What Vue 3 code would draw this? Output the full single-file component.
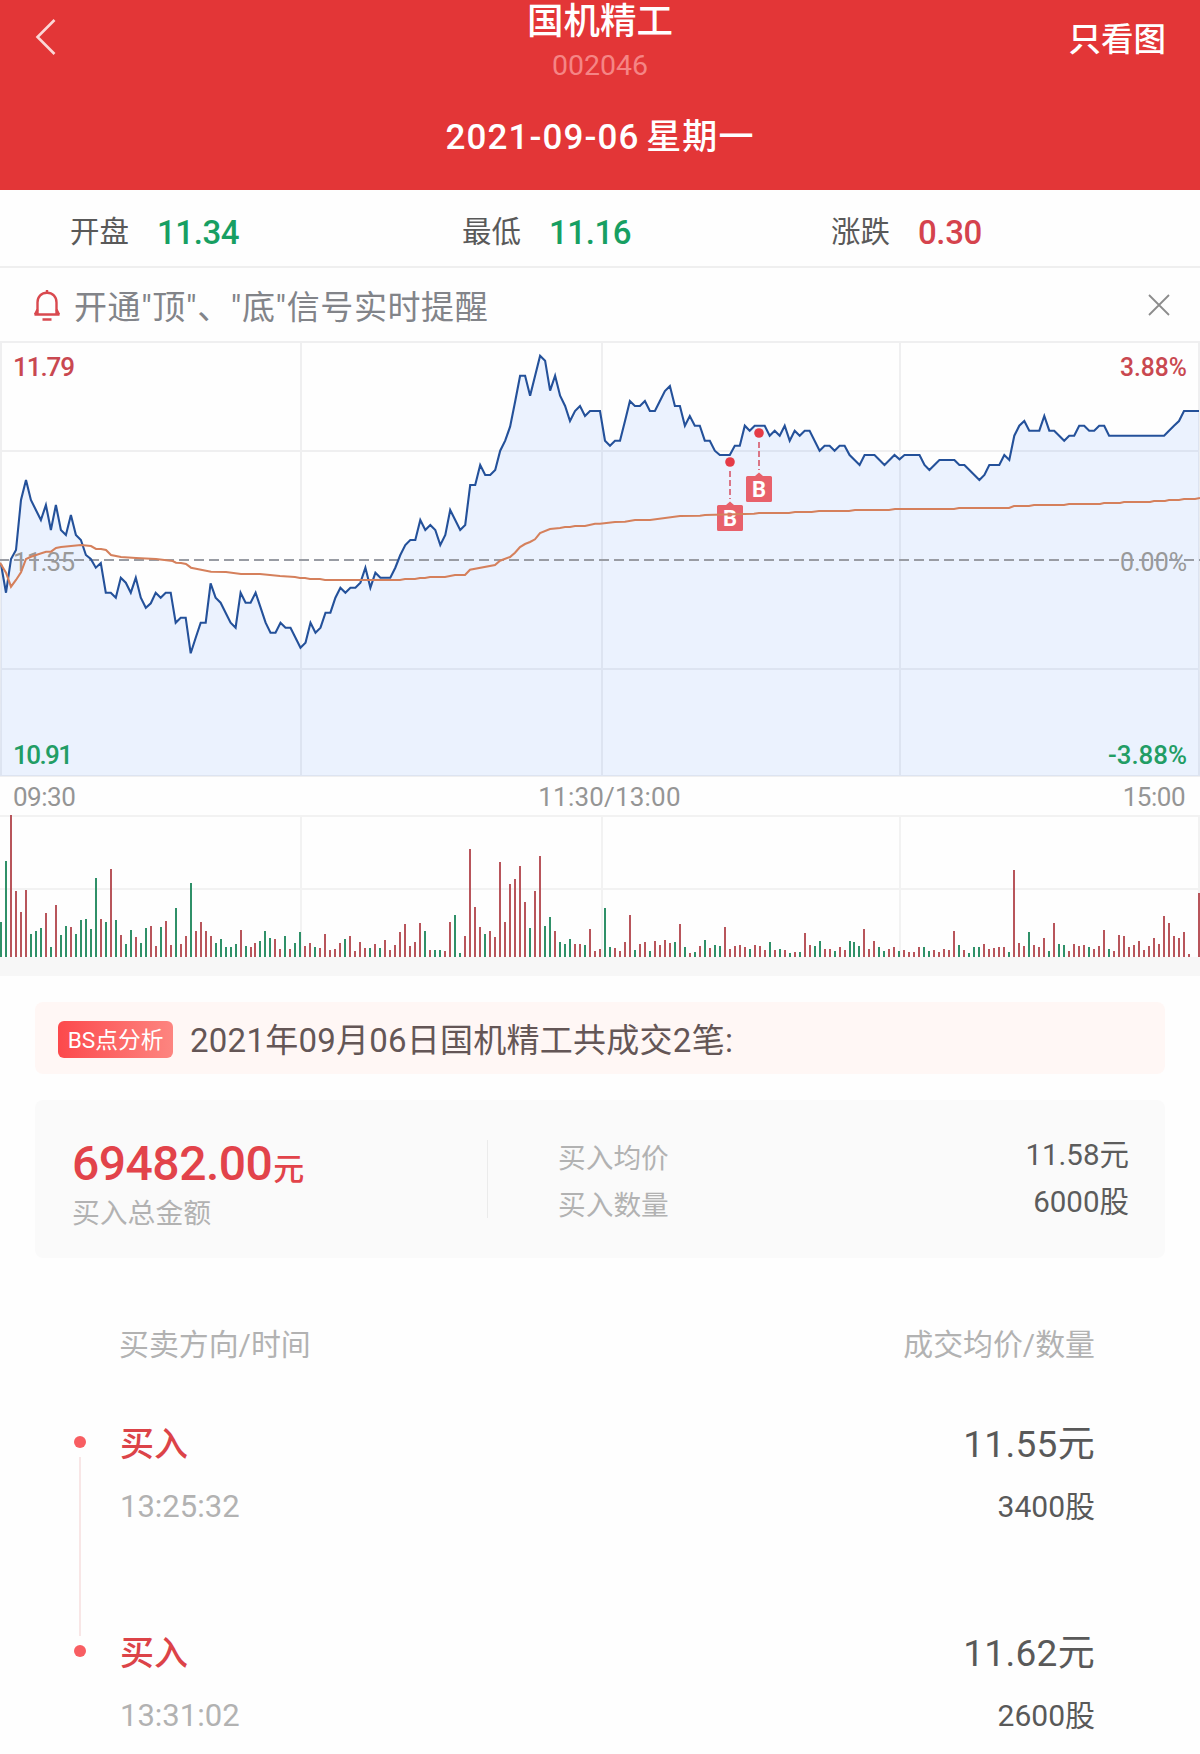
<script setup>
import { computed } from 'vue'

const stock = { name: '国机精工', code: '002046', date: '2021-09-06 星期一' }

const quotes = [
  { label: '开盘', value: '11.34', type: 'down' },
  { label: '最低', value: '11.16', type: 'down' },
  { label: '涨跌', value: '0.30', type: 'up' }
]

const trades = [
  { side: '买入', time: '13:25:32', price: '11.55元', count: '3400股' },
  { side: '买入', time: '13:31:02', price: '11.62元', count: '2600股' }
]

// chart samples are kept in device pixels, one per minute
const RATIO = 3
const STEP = 1198 / 240
const BASE = 142

const price = [
  672, 758, 657, 630, 480, 420, 480, 510, 540, 495, 570, 495, 570, 585, 525, 585, 600, 645, 657, 683,
  669, 758, 758, 773, 713, 728, 758, 713, 773, 803, 790, 758, 773, 758, 758, 848, 833, 833, 940, 893,
  848, 848, 730, 773, 788, 818, 848, 863, 758, 788, 788, 758, 803, 848, 878, 878, 848, 863, 863, 893,
  923, 908, 848, 878, 863, 818, 818, 773, 743, 758, 743, 743, 728, 683, 743, 698, 713, 713, 713, 683,
  645, 615, 600, 600, 540, 570, 555, 570, 615, 585, 510, 540, 570, 555, 435, 435, 375, 405, 405, 390,
  332, 302, 260, 185, 107, 107, 167, 107, 47, 62, 152, 107, 167, 198, 243, 213, 198, 228, 213, 213,
  213, 302, 317, 302, 302, 243, 183, 198, 198, 183, 213, 213, 183, 153, 138, 198, 198, 257, 228, 257,
  257, 302, 302, 332, 345, 345, 345, 317, 317, 257, 272, 257, 257, 257, 287, 272, 287, 257, 302, 272,
  287, 272, 272, 302, 332, 317, 317, 332, 317, 317, 345, 360, 375, 345, 345, 345, 360, 375, 360, 345,
  358, 345, 345, 345, 345, 375, 390, 375, 360, 360, 360, 360, 375, 375, 390, 405, 420, 405, 375, 375,
  375, 345, 360, 287, 257, 243, 272, 272, 272, 228, 272, 272, 287, 302, 287, 287, 257, 257, 272, 272,
  257, 257, 287, 287, 287, 287, 287, 287, 287, 287, 287, 287, 287, 287, 272, 257, 243, 213, 213, 213,
  213
]

const average = [
  [0, 668], [18, 698], [33, 740], [48, 720], [63, 697], [78, 657], [93, 650], [108, 645], [138, 635],
  [153, 635], [168, 624], [183, 621], [213, 618], [243, 615], [273, 618], [288, 627], [303, 627],
  [318, 630], [333, 645], [363, 651], [408, 654], [468, 657], [518, 663], [528, 668], [543, 669],
  [558, 672], [573, 683], [603, 689], [633, 695], [678, 696], [723, 702], [780, 702], [840, 708],
  [885, 711], [900, 714], [915, 714], [930, 717], [960, 717], [975, 720], [1200, 720], [1215, 717],
  [1245, 717], [1260, 714], [1275, 714], [1290, 711], [1335, 711], [1365, 705], [1395, 705],
  [1410, 689], [1485, 675], [1500, 662], [1530, 651], [1545, 638], [1560, 621], [1575, 612],
  [1590, 606], [1605, 598], [1620, 579], [1650, 567], [1680, 564], [1695, 561], [1710, 561],
  [1725, 558], [1755, 558], [1785, 551], [1800, 551], [1845, 546], [1875, 545], [1905, 540],
  [1950, 540], [2040, 528], [2100, 527], [2115, 525], [2262, 521], [2277, 519], [2367, 519],
  [2385, 516], [2435, 516], [2457, 513], [2547, 513], [2565, 510], [2667, 510], [2685, 507],
  [2862, 507], [2877, 504], [3027, 504], [3042, 498], [3087, 498], [3102, 495], [3192, 495],
  [3207, 492], [3300, 492], [3312, 489], [3360, 489], [3372, 486], [3450, 486], [3462, 483],
  [3495, 483], [3507, 480], [3537, 480], [3552, 477], [3585, 477], [3600, 474]
]

// negative volume = falling minute
const volume = [
  -104, -287, 425, 197, 135, 200, -68, -77, -86, 131, -29, 155, -65, -92, 89, -68, -110, -113, -83, -236,
  113, -104, 263, -110, 65, -38, -80, 59, -41, -86, 92, 32, -89, 107, 35, -146, 38, 62, -221, 77,
  104, 77, 62, -41, -53, -29, -29, -38, 80, -32, 29, 41, -47, -77, -56, 53, 23, -62, 23, -41,
  -74, 32, 41, -29, 26, 68, 20, 23, 41, -53, 62, 17, 44, 26, -26, 38, -26, 50, 20, 35,
  74, 98, 32, 44, 101, -77, 20, -20, -20, 17, 104, -125, -11, 62, 323, 149, 89, -68, 77, 59,
  284, 104, 218, 233, 272, 164, -86, 197, 302, -92, -119, 77, -44, -38, -53, 38, 38, -35, 83, 17,
  23, -146, -29, 26, 17, 44, 125, -20, 38, 44, -17, 47, 35, 50, 41, -44, 98, -29, 11, -14,
  32, -50, 26, -35, -32, 89, 23, 32, 35, 29, -23, 35, 32, 20, -44, 20, -23, 20, -11, 14,
  -14, 71, 35, -32, -47, 23, 23, -17, 29, 20, -47, -44, -32, 83, 23, 47, -29, -17, 23, 29,
  -17, 20, 14, 14, 29, -29, -17, 20, 14, 23, 20, 77, -35, 20, -11, -29, -29, 38, 23, 26,
  29, 29, -14, 260, 41, 32, -74, 35, 29, 56, -17, 101, -38, -35, 17, 38, 32, 35, -29, 23,
  32, 80, -23, 17, 65, 62, 29, 35, 47, 20, 32, 56, 38, 122, 101, 62, 56, 74, 8, 0,
  191
]

const markers = [
  { x: 730, y: 121 },
  { x: 759, y: 92 }
]

const pricePoints = computed(() =>
  price.map((y, i) => `${(1 + i * STEP).toFixed(1)},${(y / RATIO - 1).toFixed(1)}`).join(' ')
)
const areaPoints = computed(() => `0,435 ${pricePoints.value} 1200,435`)
const averagePoints = computed(() =>
  average.map(([x, y]) => `${(x / RATIO).toFixed(1)},${(y / RATIO - 1).toFixed(1)}`).join(' ')
)
const bars = computed(() =>
  volume.map((v, i) => {
    const h = Math.round(Math.abs(v) / RATIO)
    return { x: Math.floor(i * STEP + 0.42), y: BASE - h, h, type: v < 0 ? 'down' : 'up' }
  })
)
</script>

<template>
  <div class="page">
    <header class="header">
      <div class="nav">
        <svg class="back" width="24" height="40" viewBox="0 0 24 40">
          <path d="M20.5 3 L3.5 20 L20.5 37" />
        </svg>
        <div class="title">
          <div class="name">{{ stock.name }}</div>
          <div class="code">{{ stock.code }}</div>
        </div>
        <span class="only-chart">只看图</span>
      </div>
      <div class="date">{{ stock.date }}</div>
    </header>

    <div class="quotes">
      <div v-for="q in quotes" :key="q.label" class="quote">
        <span class="quote-label">{{ q.label }}</span>
        <span class="quote-value" :class="q.type">{{ q.value }}</span>
      </div>
    </div>

    <div class="notice">
      <svg class="bell" width="28" height="34" viewBox="0 0 28 34">
        <path d="M1.5 26.5 H26.5 M4.5 26 V14.5 C4.5 8.5 8.5 4.8 14 4.8 S23.5 8.5 23.5 14.5 V26" />
        <path d="M4.5 21.5 L2 26.5 M23.5 21.5 L26 26.5 M14 2 V4.8 M9.5 31.5 H18.5" />
      </svg>
      <span class="notice-text">开通"顶"、"底"信号实时提醒</span>
      <svg class="close" width="24" height="24" viewBox="0 0 24 24">
        <path d="M2 2 L22 22 M22 2 L2 22" />
      </svg>
    </div>

    <svg class="chart" width="1200" height="436" viewBox="0 0 1200 436">
      <g class="grid">
        <path d="M0 1 H1200 M0 110 H1200 M0 328 H1200 M0 435 H1200" />
        <path d="M1 0 V436 M301 0 V436 M602 0 V436 M900 0 V436 M1199 0 V436" />
      </g>
      <polygon class="area" :points="areaPoints" />
      <g class="labels">
        <text class="up" x="13" y="35" textLength="62">11.79</text>
        <text class="muted" x="13" y="230" textLength="62">11.35</text>
        <text class="down" x="13" y="423" textLength="60">10.91</text>
        <text class="up" x="1120" y="35" textLength="67" lengthAdjust="spacingAndGlyphs">3.88%</text>
        <text class="muted" x="1120" y="230" textLength="67" lengthAdjust="spacingAndGlyphs">0.00%</text>
        <text class="down" x="1108" y="423" textLength="79" lengthAdjust="spacingAndGlyphs">-3.88%</text>
      </g>
      <path class="baseline" d="M-1 219 H1200" />
      <polyline class="price" :points="pricePoints" />
      <g v-for="m in markers" :key="m.x" class="marker" :transform="`translate(${m.x} ${m.y})`">
        <path class="marker-line" d="M0 9 V37" />
        <circle r="4.8" />
        <path class="marker-box" d="M-4 43 L0 39.5 L4 43 H11.5 Q13 43 13 44.5 V67.5 Q13 69 11.5 69 H-11.5 Q-13 69 -13 67.5 V44.5 Q-13 43 -11.5 43 Z" />
        <text x="0" y="64" text-anchor="middle">B</text>
      </g>
      <polyline class="average" :points="averagePoints" />
    </svg>

    <div class="axis">
      <span>09:30</span>
      <span class="noon">11:30/13:00</span>
      <span>15:00</span>
    </div>

    <svg class="volume" width="1200" height="142" viewBox="0 0 1200 142">
      <g class="grid light">
        <path d="M0 1 H1200 M0 74 H1200" />
        <path d="M301 0 V142 M602 0 V142 M900 0 V142 M1199 0 V142" />
      </g>
      <rect v-for="(b, i) in bars" :key="i" :class="b.type" :x="b.x" :y="b.y" width="2" :height="b.h" />
    </svg>

    <div class="divider"></div>

    <div class="banner">
      <span class="tag">BS点分析</span>
      <span class="banner-text">2021年09月06日国机精工共成交2笔:</span>
    </div>

    <div class="summary">
      <div class="total">
        <div class="amount">69482.00<span class="unit">元</span></div>
        <div class="total-label">买入总金额</div>
      </div>
      <div class="detail">
        <div class="detail-row"><span>买入均价</span><b>11.58元</b></div>
        <div class="detail-row"><span>买入数量</span><b>6000股</b></div>
      </div>
    </div>

    <div class="list-head">
      <span>买卖方向/时间</span>
      <span>成交均价/数量</span>
    </div>

    <div class="trades">
      <div v-for="t in trades" :key="t.time" class="trade">
        <div class="rail"><i class="dot"></i><i class="line"></i></div>
        <div class="trade-body">
          <div class="trade-row main">
            <span class="side">{{ t.side }}</span>
            <span class="trade-price">{{ t.price }}</span>
          </div>
          <div class="trade-row sub">
            <span class="time">{{ t.time }}</span>
            <span class="count">{{ t.count }}</span>
          </div>
        </div>
      </div>
    </div>
  </div>
</template>

<style>
body {
  margin: 0;
  background: #fefefe;
}
</style>

<style scoped>
.page {
  width: 1200px;
  height: 1754px;
  overflow: hidden;
  background: #fefefe;
  color: #595959;
  font-family: Roboto, "Noto Sans CJK SC", sans-serif;
}
svg {
  display: block;
}
.header {
  height: 190px;
  background: #e33637;
  color: #fff;
}
.nav {
  display: grid;
  grid-template-columns: 1fr auto 1fr;
  height: 114px;
}
.back {
  margin: 17px 0 0 34px;
  fill: none;
  stroke: #fbd7d7;
  stroke-width: 2.6;
}
.title {
  text-align: center;
}
.name {
  height: 44px;
  line-height: 44px;
  font-size: 36.5px;
  font-weight: 500;
}
.code {
  line-height: 44px;
  font-size: 28.5px;
  color: #f58585;
}
.only-chart {
  justify-self: end;
  margin-right: 34px;
  line-height: 80px;
  font-size: 32.5px;
  font-weight: 500;
}
.date {
  line-height: 48px;
  text-align: center;
  font-size: 35px;
  font-weight: 500;
  letter-spacing: 1.1px;
  word-spacing: -3px;
}
.quotes {
  display: grid;
  grid-template-columns: 392px 369px 1fr;
  height: 78px;
  padding-left: 70px;
  border-bottom: 2px solid #efefef;
  box-sizing: border-box;
}
.quote {
  display: flex;
  gap: 28px;
  line-height: 86px;
}
.quote-label {
  font-size: 29.5px;
  line-height: 84px;
}
.quote-value {
  font-size: 33px;
  font-weight: 500;
  letter-spacing: -0.4px;
}
.quote-value.up {
  color: #d5434d;
}
.quote-value.down {
  color: #179f62;
}
.notice {
  display: flex;
  align-items: center;
  height: 73px;
  padding: 1px 29px 0 33px;
  box-sizing: border-box;
}
.bell {
  fill: none;
  stroke: #d9494f;
  stroke-width: 2.4;
}
.notice-text {
  flex: 1;
  margin-left: 13px;
  font-size: 33px;
  letter-spacing: 0.6px;
  color: #828489;
}
.close {
  fill: none;
  stroke: #8c8c8c;
  stroke-width: 1.8;
}
.grid {
  fill: none;
  stroke: #efeff0;
  stroke-width: 2;
}
.grid.light {
  stroke: #f2f2f2;
}
.area {
  fill: rgba(50, 128, 255, 0.095);
}
.labels text {
  font-size: 26px;
  font-weight: 500;
}
.labels .up {
  fill: #c94850;
}
.labels .down {
  fill: #229d65;
}
.labels .muted {
  fill: #999;
  font-weight: 400;
}
.baseline {
  fill: none;
  stroke: #999ca3;
  stroke-width: 1.8;
  stroke-dasharray: 10 5;
}
.price {
  fill: none;
  stroke: #24519a;
  stroke-width: 2.1;
}
.average {
  fill: none;
  stroke: #d5805c;
  stroke-width: 2.1;
}
.marker circle {
  fill: #e53b46;
}
.marker-line {
  stroke: #d9697a;
  stroke-width: 1.8;
  stroke-dasharray: 6 3;
}
.marker-box {
  fill: #e8616b;
}
.marker text {
  fill: #fff;
  font-size: 22px;
  font-weight: 700;
}
.axis {
  display: grid;
  grid-template-columns: 1fr auto 1fr;
  height: 38px;
  padding: 0 15px 0 13px;
  line-height: 40px;
  font-size: 26px;
  letter-spacing: -0.5px;
  color: #959595;
}
.axis .noon {
  letter-spacing: 0.2px;
  padding-left: 21px;
}
.axis span:last-child {
  text-align: right;
}
.volume .up {
  fill: #b8555b;
}
.volume .down {
  fill: #2f9068;
}
.divider {
  height: 19px;
  background: #f7f7f7;
}
.banner {
  display: flex;
  align-items: center;
  height: 72px;
  margin: 26px 35px 26px;
  padding-left: 23px;
  box-sizing: border-box;
  border-radius: 8px;
  background: #fff7f5;
}
.tag {
  width: 115px;
  height: 37px;
  margin: 2px 17px 0 0;
  border-radius: 6px;
  background: linear-gradient(90deg, #fc494c, #fd8580);
  color: #fff;
  font-size: 22.7px;
  line-height: 39px;
  text-align: center;
}
.banner-text {
  font-size: 33px;
  letter-spacing: 0.25px;
  color: #645656;
}
.summary {
  display: flex;
  align-items: flex-start;
  height: 158px;
  margin: 0 35px;
  padding: 40px 36px 0 37px;
  box-sizing: border-box;
  border-radius: 8px;
  background: #fafafa;
}
.total {
  width: 415px;
  height: 78px;
  border-right: 1px solid #ebebeb;
}
.amount {
  height: 50px;
  line-height: 47px;
  font-size: 48px;
  font-weight: 500;
  letter-spacing: -0.5px;
  color: #e2434a;
  white-space: nowrap;
}
.unit {
  margin-left: 1px;
  font-size: 31px;
}
.total-label {
  line-height: 48px;
  font-size: 27.8px;
  color: #b2b2b2;
}
.detail {
  flex: 1;
  margin: -8px 0 0 70px;
}
.detail-row {
  display: flex;
  justify-content: space-between;
  height: 47px;
  line-height: 54px;
  font-size: 27.7px;
  color: #b2b2b2;
}
.detail-row b {
  line-height: 46px;
  font-size: 29.5px;
  font-weight: 400;
  color: #5c5c5c;
}
.list-head {
  display: flex;
  justify-content: space-between;
  margin-top: 62px;
  padding: 0 105px 0 119px;
  line-height: 50px;
  font-size: 29.9px;
  color: #b2b2b2;
}
.trades {
  margin-top: 48px;
  padding: 0 105px 0 74px;
}
.trade {
  display: flex;
  height: 209px;
}
.rail {
  display: flex;
  flex-direction: column;
  align-items: center;
  width: 12px;
  height: 220px;
  margin-right: 34px;
  padding-top: 18px;
  box-sizing: border-box;
}
.dot {
  width: 12px;
  height: 12px;
  flex-shrink: 0;
  border-radius: 50%;
  background: #f85e62;
}
.line {
  width: 2px;
  height: 179px;
  flex-shrink: 0;
  margin-top: 9px;
  background: #f8e6e6;
}
.trade:last-child .line {
  display: none;
}
.trade-body {
  flex: 1;
}
.trade-row {
  display: flex;
  justify-content: space-between;
}
.main {
  height: 64px;
  line-height: 52px;
}
.side {
  font-size: 34px;
  font-weight: 500;
  color: #dc4348;
}
.trade-price {
  font-size: 37px;
  line-height: 53px;
  letter-spacing: 0.3px;
}
.sub {
  line-height: 50px;
}
.time {
  font-size: 31px;
  color: #b2b2b2;
}
.count {
  font-size: 30px;
}
</style>
